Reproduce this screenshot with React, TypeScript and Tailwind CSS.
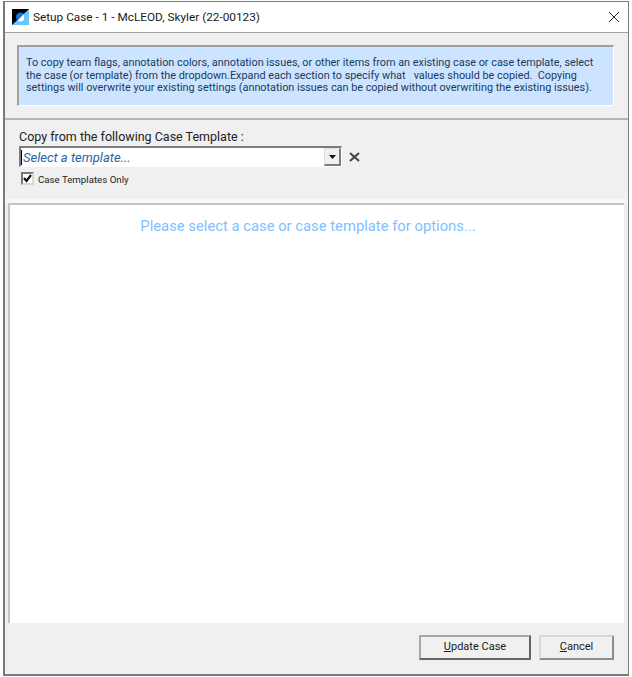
export default function App() {
  return (
    <div className="w-[632px] h-[677px] bg-white pl-[3px] pr-[3px] pt-px pb-[1px] font-['Roboto',sans-serif]">
      <div className="h-full flex flex-col border-2 border-t border-r border-[#7a7a7a] bg-[#f0f0f0]">
        {/* Title bar */}
        <div className="h-[31px] shrink-0 bg-white border-b border-[#a0a0a0] flex items-center pl-[7px] pr-[7px]">
          <svg width="17" height="16" viewBox="0 0 17 16" className="shrink-0">
            <rect width="17" height="16" fill="#000" />
            <path d="M17 0V16H0Z" fill="#66c8ff" />
            <circle cx="8.500" cy="8" r="4.500" fill="#0a78e0" />
            <path d="M12 5L5.500 11.500Q8 13.500 11 12Q13.500 9 12 5Z" fill="#fff" />
          </svg>
          <span className="ml-[4px] mt-[2px] text-[11.8px] text-[#1a1a1a] leading-none">Setup Case - 1 - McLEOD, Skyler (22-00123)</span>
          <svg width="12" height="12" viewBox="0 0 12 12" className="ml-auto mr-[1px]">
            <path d="M1 1L11 11M11 1L1 11" stroke="#222" strokeWidth="1" fill="none" />
          </svg>
        </div>

        {/* Info */}
        <div className="h-[87px] shrink-0 border-b-2 border-[#b4b4b4] pl-[12px] pr-[14px] pt-[12px]">
          <div className="h-[61px] bg-[#cce4ff] border-t-2 border-l-2 border-b border-r border-t-[#a0a0a0] border-l-[#a0a0a0] border-b-white border-r-white pl-[7px] pt-[10px] text-[10.85px] leading-[12.5px] text-[#1a3a5c] whitespace-pre">
            {"To copy team flags, annotation colors, annotation issues, or other items from an existing case or case template, select\nthe case (or template) from the dropdown.Expand each section to specify what   values should be copied.  Copying\nsettings will overwrite your existing settings (annotation issues can be copied without overwriting the existing issues)."}
          </div>
        </div>

        {/* Template picker */}
        <div className="h-[79px] shrink-0 pl-[14px] pt-[9px] flex flex-col">
          <div className="text-[12.5px] leading-[16px] text-[#222]">Copy from the following Case Template :</div>
          <div className="mt-[1px] flex items-center">
            <div className="w-[323px] h-[21px] bg-white border-t-2 border-l-2 border-r border-b border-t-[#7d7d7d] border-l-[#7d7d7d] border-r-white border-b-white flex items-stretch">
              <div className="flex-1 flex items-center pt-px text-[13px] italic text-[#2a62a8]">
                <span className="w-px h-[15px] bg-black mr-px" />
                Select a template...
              </div>
              <div className="w-[17px] bg-[#f0f0f0] border-r-2 border-b-2 border-l border-t border-l-[#e0e0e0] border-t-[#e0e0e0] border-r-[#7d7d7d] border-b-[#7d7d7d] flex items-center justify-center">
                <svg width="7" height="4" viewBox="0 0 7 4"><path d="M0 0H7L3.500 4Z" fill="#111" /></svg>
              </div>
            </div>
            <svg width="11" height="10" viewBox="0 0 11 10" className="ml-[7px]">
              <path d="M1 1L10 9M10 1L1 9" stroke="#444" strokeWidth="2" fill="none" />
            </svg>
          </div>
          <div className="mt-[5px] ml-[2px] flex items-center">
            <div className="w-[13px] h-[13px] bg-white border-2 border-t-[#7a7a7a] border-l-[#7a7a7a] border-r-[#d8d8d8] border-b-[#d8d8d8] flex items-center justify-center">
              <svg width="9" height="9" viewBox="0 0 9 9" className="shrink-0"><path d="M1 4L3.500 7L8 1" stroke="#111" strokeWidth="2.200" fill="none" /></svg>
            </div>
            <span className="ml-[4px] mt-[2px] text-[9.7px] leading-none text-[#222]">Case Templates Only</span>
          </div>
        </div>

        {/* Strip above the panel */}
        <div className="h-[4px] shrink-0 bg-[#f8f8f8]" />

        {/* Content */}
        <div className="flex-1 min-h-0 ml-[3px] mr-[4px] bg-white border-t-2 border-l-2 border-[#c4c4c4] flex justify-center pt-[12px] pr-[18px]">
          <span className="text-[14.8px] leading-[18px] text-[#7fbfff]">Please select a case or case template for options...</span>
        </div>

        {/* Footer */}
        <div className="h-[51px] shrink-0 flex items-start justify-end pt-[12px] pr-[14px] gap-[8px]">
          <button className="w-[112px] h-[25px] pb-[1px] bg-[#f0f0f0] border-2 border-t-[#a8a8a8] border-l-[#a8a8a8] border-r-[#666] border-b-[#666] text-[11px] text-[#1a1a1a]">
            <u>U</u>pdate Case
          </button>
          <button className="w-[75px] h-[25px] pb-[1px] bg-[#f0f0f0] border-2 border-t-[#d8d8d8] border-l-[#d8d8d8] border-r-[#8c8c8c] border-b-[#8c8c8c] text-[11px] text-[#1a1a1a]">
            <u>C</u>ancel
          </button>
        </div>
      </div>
    </div>
  );
}
